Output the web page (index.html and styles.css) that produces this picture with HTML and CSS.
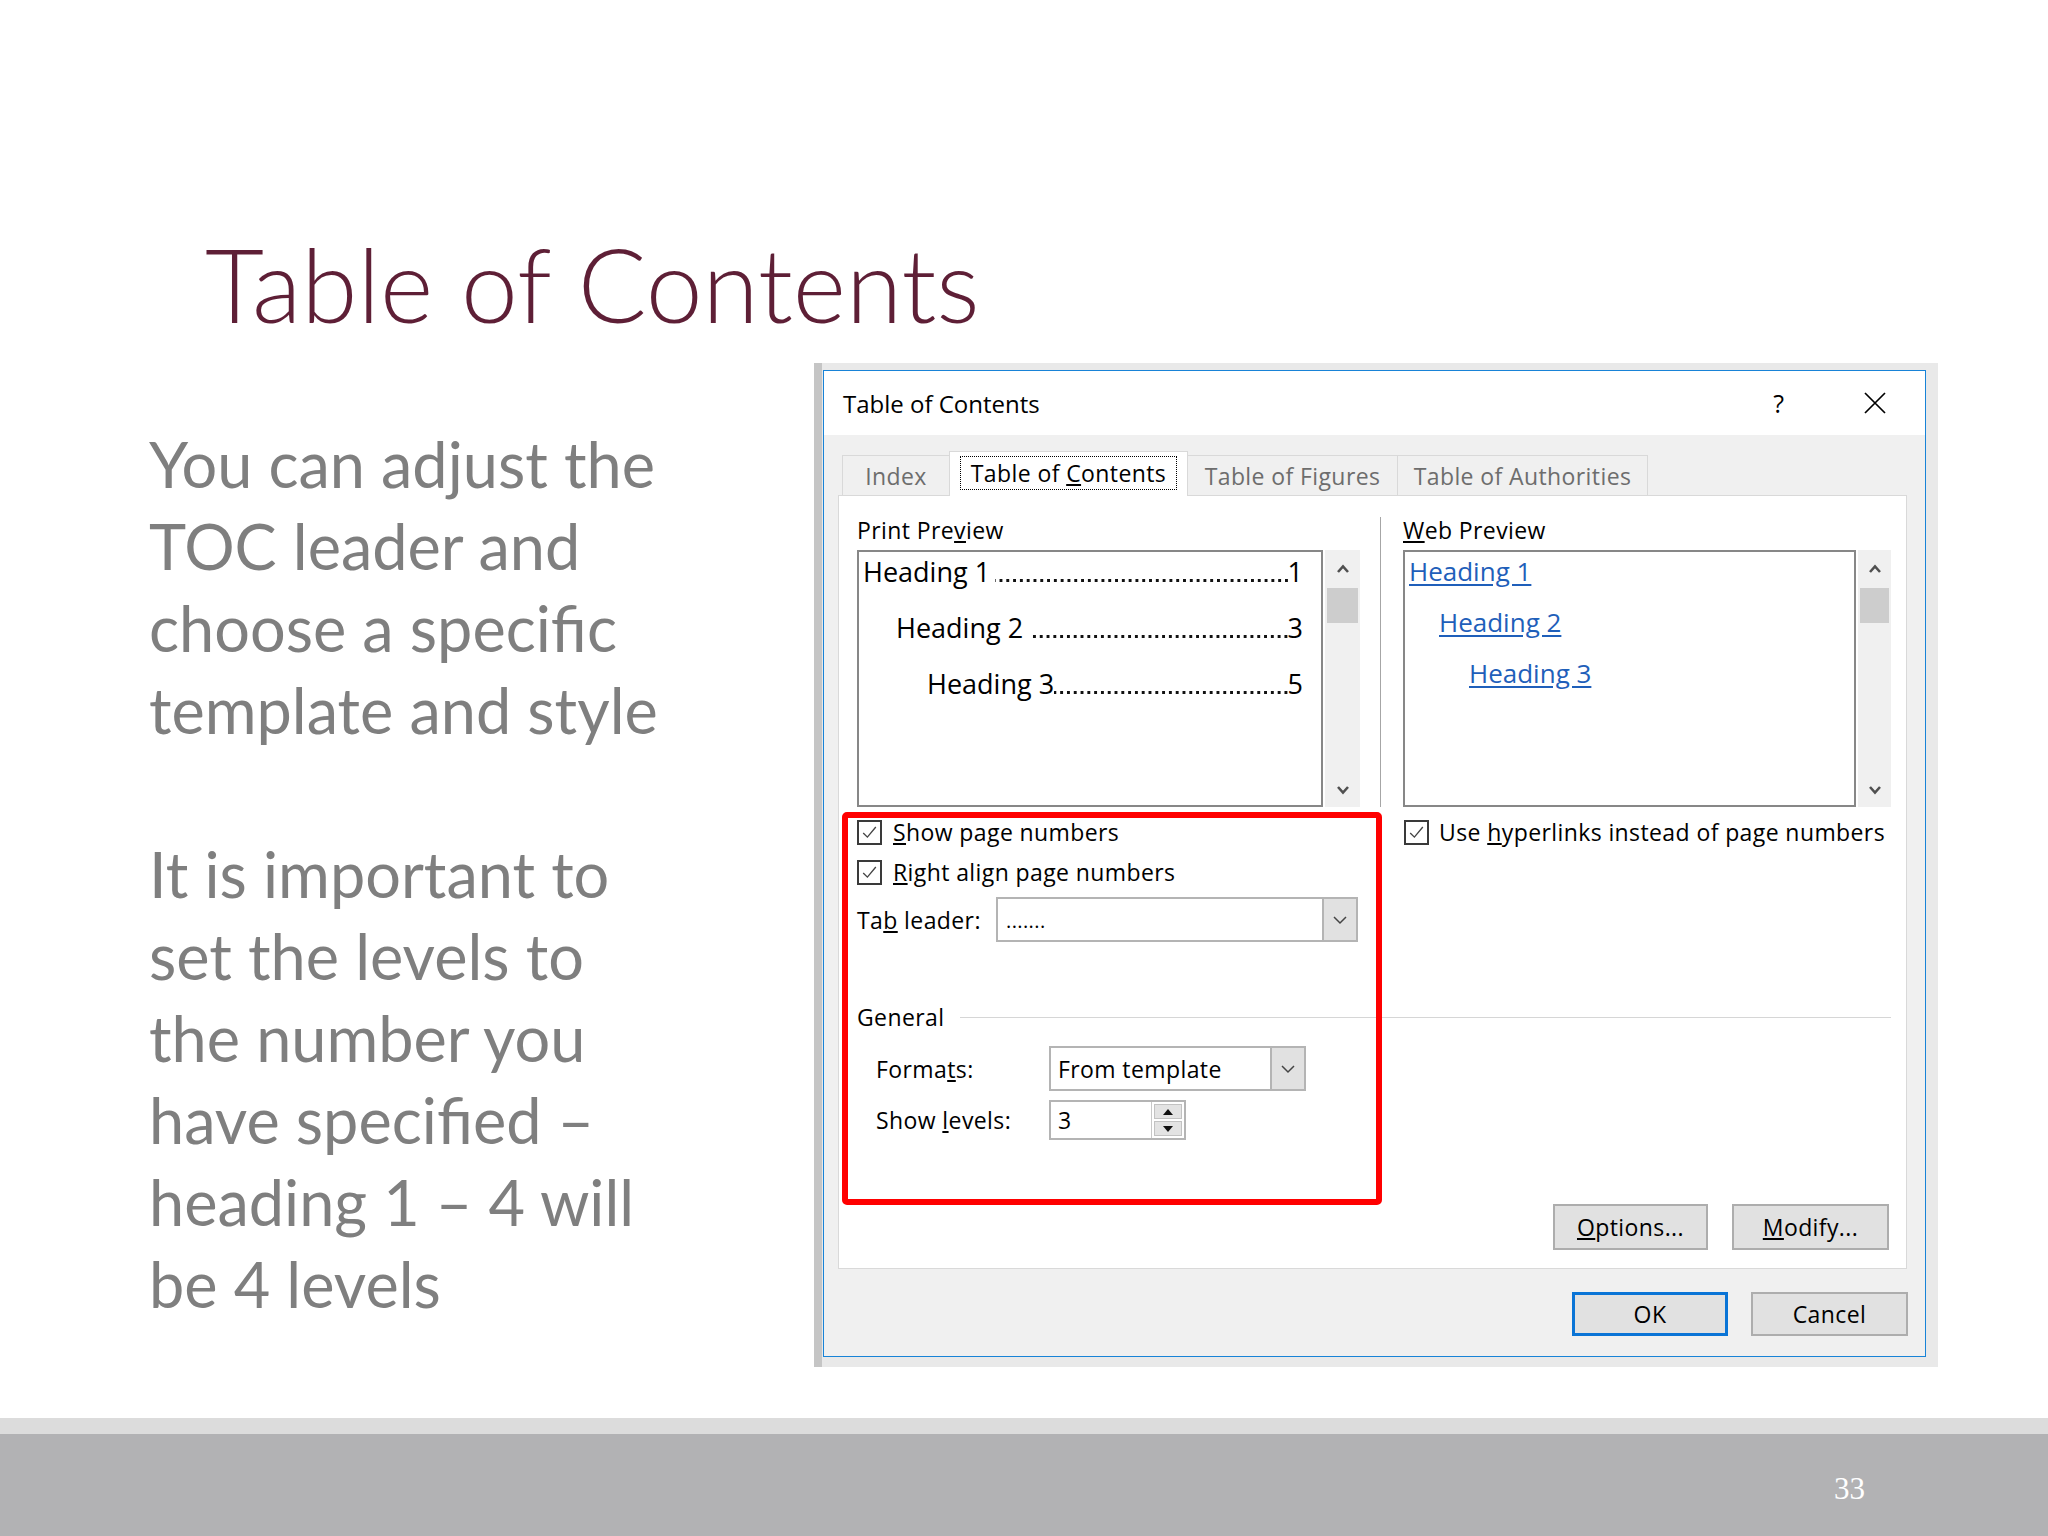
FILE: index.html
```html
<!DOCTYPE html>
<html>
<head>
<meta charset="utf-8">
<title>Table of Contents</title>
<link rel="stylesheet" href="styles.css">
</head>
<body>
<div class="slide">
  <h1 class="title">Table of Contents</h1>
  <div class="content">
    <div class="text">
      <p>You can adjust the<br>TOC leader and<br>choose a specific<br>template and style</p>
      <p>It is important to<br>set the levels to<br>the number you<br>have specified –<br>heading 1 – 4 will<br>be 4 levels</p>
    </div>
    <div class="shot">
      <div class="dialog">
        <div class="titlebar">
          <span class="dtitle">Table of Contents</span>
          <span class="help">?</span>
          <svg class="close" viewBox="0 0 22 22"><path d="M1 1 L21 21 M21 1 L1 21" stroke="#000" stroke-width="1.7" fill="none"/></svg>
        </div>
        <div class="dbody">
          <div class="tabs">
            <div class="tab t-index">Index</div>
            <div class="tab active t-toc"><span class="focus"><span>Table of <u>C</u>ontents</span></span></div>
            <div class="tab t-fig">Table of Figures</div>
            <div class="tab t-auth">Table of Authorities</div>
          </div>
          <div class="panel">
            <div class="grid">
              <div class="col">
                <div class="lbl">Print Pre<u>v</u>iew</div>
                <div class="pv">
                  <div class="pvbox print">
                    <div class="trow lv1"><span>Heading 1&thinsp;</span><span class="dots"></span><span>1</span></div>
                    <div class="trow lv2"><span>Heading 2&nbsp;</span><span class="dots"></span><span>3</span></div>
                    <div class="trow lv3"><span>Heading 3</span><span class="dots"></span><span>5</span></div>
                  </div>
                  <div class="sb">
                    <div class="sb-up"><svg class="chev" viewBox="0 0 14 9"><path d="M2 8 L7 2.5 L12 8" stroke="#505050" stroke-width="2.6" fill="none"/></svg></div>
                    <div class="sb-thumb"></div>
                    <div class="sb-fill"></div>
                    <div class="sb-down"><svg class="chev" viewBox="0 0 14 9"><path d="M2 1 L7 6.5 L12 1" stroke="#505050" stroke-width="2.6" fill="none"/></svg></div>
                  </div>
                </div>
              </div>
              <div class="sep"></div>
              <div class="col">
                <div class="lbl"><u>W</u>eb Preview</div>
                <div class="pv">
                  <div class="pvbox web">
                    <div class="wrow lv1"><a>Heading 1</a></div>
                    <div class="wrow lv2"><a>Heading 2</a></div>
                    <div class="wrow lv3"><a>Heading 3</a></div>
                  </div>
                  <div class="sb narrow">
                    <div class="sb-up"><svg class="chev" viewBox="0 0 14 9"><path d="M2 8 L7 2.5 L12 8" stroke="#505050" stroke-width="2.6" fill="none"/></svg></div>
                    <div class="sb-thumb"></div>
                    <div class="sb-fill"></div>
                    <div class="sb-down"><svg class="chev" viewBox="0 0 14 9"><path d="M2 1 L7 6.5 L12 1" stroke="#505050" stroke-width="2.6" fill="none"/></svg></div>
                  </div>
                </div>
              </div>

              <div class="opts">
                <div class="cbrow"><span class="cb"><svg viewBox="0 0 25 25"><path d="M5 13 L10 18 L20 6" stroke="#444" stroke-width="1.6" fill="none"/></svg></span><span><u>S</u>how page numbers</span></div>
                <div class="cbrow"><span class="cb"><svg viewBox="0 0 25 25"><path d="M5 13 L10 18 L20 6" stroke="#444" stroke-width="1.6" fill="none"/></svg></span><span><u>R</u>ight align page numbers</span></div>
                <div class="fieldrow leader">
                  <span class="flabel">Ta<u>b</u> leader:</span>
                  <div class="combo w-leader">
                    <span class="cval dotsval">.......</span>
                    <span class="cbtn"><svg viewBox="0 0 16 10"><path d="M2 2 L8 8 L14 2" stroke="#444" stroke-width="1.5" fill="none"/></svg></span>
                  </div>
                </div>
              </div>
              <div></div>
              <div class="opts">
                <div class="cbrow hyper"><span class="cb"><svg viewBox="0 0 25 25"><path d="M5 13 L10 18 L20 6" stroke="#444" stroke-width="1.6" fill="none"/></svg></span><span>Use <u>h</u>yperlinks instead of page numbers</span></div>
              </div>
            </div>

            <div class="general"><span>General</span><span class="gline"></span></div>

            <div class="fieldrow formats">
              <span class="flabel2">Forma<u>t</u>s:</span>
              <div class="combo w-formats">
                <span class="cval">From template</span>
                <span class="cbtn"><svg viewBox="0 0 16 10"><path d="M2 2 L8 8 L14 2" stroke="#444" stroke-width="1.5" fill="none"/></svg></span>
              </div>
            </div>
            <div class="fieldrow levels">
              <span class="flabel2">Show <u>l</u>evels:</span>
              <div class="spin">
                <span class="cval">3</span>
                <span class="spinbtns">
                  <span class="sbtn"><svg viewBox="0 0 10 6"><polygon points="0,6 5,0 10,6" fill="#111"/></svg></span>
                  <span class="sbtn"><svg viewBox="0 0 10 6"><polygon points="0,0 10,0 5,6" fill="#111"/></svg></span>
                </span>
              </div>
            </div>

            <div class="pbtns">
              <div class="btn w-opt"><span><u>O</u>ptions...</span></div>
              <div class="btn w-mod"><span><u>M</u>odify...</span></div>
            </div>

            <div class="redbox"></div>
          </div>
          <div class="dbtns">
            <div class="btn ok">OK</div>
            <div class="btn cancel">Cancel</div>
          </div>
        </div>
      </div>
    </div>
  </div>
  <div class="footer"><span class="pnum">33</span></div>
</div>
</body>
</html>
```

FILE: styles.css
```css
* { box-sizing: border-box; }
html, body { margin: 0; padding: 0; background: #fff; }

.slide {
  width: 2048px;
  height: 1536px;
  display: flex;
  flex-direction: column;
  background: #fff;
  overflow: hidden;
}

.title {
  margin: 224px 0 0 0;
  padding-left: 205px;
  height: 120px;
  font-family: Lato, "Open Sans", sans-serif;
  font-weight: 300;
  font-size: 102px;
  line-height: 120px;
  color: #5e1f36;
}

.content {
  flex: 1;
  display: flex;
  align-items: flex-start;
}

.text {
  margin: 79px 0 0 149px;
  width: 665px;
  font-family: Lato, "Open Sans", sans-serif;
  font-size: 63px;
  line-height: 82px;
  color: #7f7f7f;
}
.text p { margin: 0 0 82px 0; }

.shot {
  margin-top: 19px;
  border-left: 8px solid #c5c5c5;
  padding: 7px 12px 10px 1px;
  background: #e9e9e9;
}

.dialog {
  width: 1103px;
  border: 1px solid #1883d7;
  background: #f0f0f0;
  font-family: "Open Sans", sans-serif;
  font-size: 23px;
  letter-spacing: 0.4px;
  color: #000;
}

.titlebar {
  height: 64px;
  background: #fff;
  display: flex;
  align-items: center;
  padding: 0 39px 0 19px;
  letter-spacing: 0;
}
.dtitle { flex: 1; font-size: 24px; }
.help { font-size: 25px; margin-right: 80px; }
.close { width: 22px; height: 22px; display: block; }

.dbody { padding: 0 18px 20px 14px; }

.tabs {
  display: flex;
  align-items: flex-end;
  height: 40px;
  margin-top: 20px;
  padding-left: 4px;
  position: relative;
  z-index: 1;
}
.tab {
  height: 40px;
  display: flex;
  align-items: center;
  justify-content: center;
  background: #f0f0f0;
  border: 1px solid #d9d9d9;
  border-bottom: none;
  color: #6d6d6d;
  margin-left: -1px;
  white-space: nowrap;
}
.tab.active {
  height: 45px;
  margin-bottom: -1px;
  background: #fff;
  color: #000;
}
.t-index { width: 108px; margin-left: 0; }
.t-toc { width: 239px; }
.t-fig { width: 211px; }
.t-auth { width: 251px; }
.focus {
  height: 34px;
  padding: 0 10px;
  border: 1px dotted #000;
  display: flex;
  align-items: center;
  margin-top: -2px;
}

.panel {
  position: relative;
  background: #fff;
  border: 1px solid #d9d9d9;
  padding: 19px 15px 18px 18px;
}

.grid {
  display: grid;
  grid-template-columns: 503px 43px 488px;
}
.lbl { height: 30px; line-height: 30px; margin-bottom: 5px; white-space: nowrap; }
.pv { display: flex; height: 257px; }
.pvbox { border: 2px solid #878787; background: #fff; letter-spacing: 0; }
.pvbox.print { width: 466px; padding: 2px 18px 0 4px; font-size: 27px; }
.pvbox.web { width: 453px; padding: 1px 0 0 4px; font-size: 26px; }

.trow {
  height: 36px;
  line-height: 36px;
  margin-bottom: 20px;
  display: flex;
  white-space: nowrap;
}
.dots {
  flex: 1;
  background-image: linear-gradient(to right, #111 2.6px, transparent 2.6px);
  background-size: 6.8px 3px;
  background-repeat: repeat-x;
  background-position: right 3px top 25px;
}
.lv2.trow { padding-left: 33px; }
.lv3.trow { padding-left: 64px; }

.wrow { height: 36px; line-height: 36px; margin-bottom: 15px; white-space: nowrap; }
.wrow a { color: #1f5fba; text-decoration: underline; text-underline-offset: 3px; }
.lv2.wrow { padding-left: 30px; }
.lv3.wrow { padding-left: 60px; }

.sb {
  width: 35px;
  margin-left: 2px;
  background: #f0f0f0;
  display: flex;
  flex-direction: column;
  align-items: stretch;
}
.sb.narrow { width: 33px; }
.sb-up, .sb-down { display: flex; align-items: center; justify-content: center; }
.sb-up { height: 36px; }
.sb-down { height: 34px; }
.sb-thumb { height: 35px; margin: 2px 2px 0 2px; background: #cdcdcd; }
.sb-fill { flex: 1; }
.chev { width: 14px; height: 9px; display: block; }

.sep { margin: 2px 0 0 20px; border-left: 1px solid #a6a6a6; }

.opts { margin-top: 10px; }
.cbrow {
  height: 30px;
  display: flex;
  align-items: center;
  margin-bottom: 10px;
  white-space: nowrap;
}
.cb {
  width: 25px;
  height: 25px;
  border: 2px solid #3a3a3a;
  margin-right: 11px;
  background: #fff;
  display: block;
  flex: none;
}
.cb svg { width: 21px; height: 21px; display: block; }
.hyper { margin-left: 1px; }
.hyper .cb { margin-right: 10px; }

.fieldrow { display: flex; align-items: center; white-space: nowrap; }
.leader { height: 45px; }
.flabel { width: 139px; }
.flabel2 { width: 173px; }

.combo, .spin {
  height: 100%;
  display: flex;
  align-items: stretch;
  border: 2px solid #b4b4b4;
  background: #fff;
}
.w-leader { width: 362px; }
.w-formats { width: 257px; }
.cval { flex: 1; display: flex; align-items: center; padding-left: 7px; }
.dotsval { font-size: 20px; padding-left: 8px; padding-top: 2px; }
.cbtn {
  width: 34px;
  background: #e1e1e1;
  border-left: 2px solid #b4b4b4;
  display: flex;
  align-items: center;
  justify-content: center;
}
.cbtn svg { width: 16px; height: 10px; display: block; }

.general {
  margin-top: 60px;
  height: 30px;
  display: flex;
  align-items: center;
}
.gline { flex: 1; height: 0; border-top: 1px solid #d6d6d6; margin-left: 16px; }

.formats { margin-top: 14px; height: 45px; padding-left: 19px; }
.levels { margin-top: 9px; height: 40px; padding-left: 19px; }
.spin { width: 137px; }
.spinbtns {
  width: 33px;
  display: flex;
  flex-direction: column;
  gap: 2px;
  padding: 2px;
  border-left: 1px solid #c8c8c8;
  background: #fff;
}
.sbtn {
  flex: 1;
  background: #e3e3e3;
  border: 1px solid #c2c2c2;
  display: flex;
  align-items: center;
  justify-content: center;
}
.sbtn svg { width: 10px; height: 6px; display: block; }

.pbtns {
  margin-top: 64px;
  height: 46px;
  display: flex;
  justify-content: flex-end;
  gap: 24px;
  margin-right: 2px;
}
.btn {
  height: 100%;
  background: #e1e1e1;
  border: 2px solid #adadad;
  display: flex;
  align-items: center;
  justify-content: center;
  white-space: nowrap;
}
.w-opt { width: 155px; }
.w-mod { width: 157px; }

.redbox {
  position: absolute;
  left: 3px;
  top: 316px;
  width: 540px;
  height: 393px;
  border: 6px solid #ff0000;
  border-radius: 5px;
}

.dbtns {
  margin-top: 23px;
  height: 44px;
  display: flex;
  justify-content: flex-end;
  gap: 23px;
  margin-right: -1px;
}
.ok { width: 156px; border: 3px solid #0a74d6; }
.cancel { width: 157px; }

.footer {
  height: 118px;
  border-top: 16px solid #dcdcdc;
  background: #b2b2b4;
  display: flex;
  align-items: center;
  padding: 8px 0 0 1834px;
  font-family: "Liberation Serif", "Times New Roman", serif;
  font-size: 31px;
  color: #fff;
}
```
